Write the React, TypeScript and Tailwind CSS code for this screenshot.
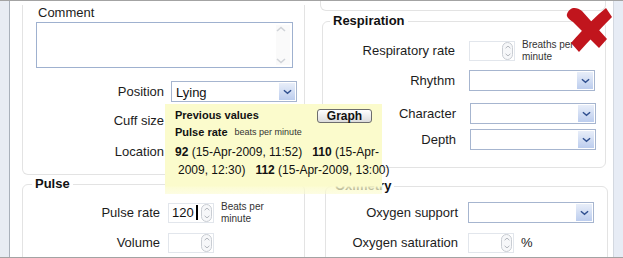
import type { ReactNode } from "react";

const font = { fontFamily: '"Liberation Sans", Arial, sans-serif' };

function Chevron({ up, className }: { up?: boolean; className?: string }) {
  return (
    <svg viewBox="0 0 10 6" className={className} fill="none">
      <path d={up ? "M1 5 L5 1.5 L9 5" : "M1 1 L5 4.5 L9 1"} stroke="currentColor" strokeWidth="1.6" />
    </svg>
  );
}

function Select({ value }: { value?: string }) {
  return (
    <div className="flex h-[21px] w-[126px] items-stretch border border-[#a6b5cf] bg-white p-px">
      <div className="flex-1 pl-[3px] text-[13px] leading-[19px] text-[#111]">{value}</div>
      <div className="flex w-[16px] items-center justify-center bg-[linear-gradient(180deg,#e8eef9_0%,#bccdee_100%)] text-[#2f4f8f]">
        <Chevron className="h-[6px] w-[9px]" />
      </div>
    </div>
  );
}

function Spin({ value }: { value?: string }) {
  return (
    <div className="flex h-[20px] w-[46px] items-center border border-[#e2e6ec] bg-white pr-px">
      <div className="flex flex-1 items-center pl-[3px] text-[13px] text-[#111]">
        {value}
        {value && <span className="ml-[2px] h-[15px] w-[2px] bg-black" />}
      </div>
      <div className="flex h-[18px] w-[11px] flex-col items-center justify-between rounded-full border border-[#c9cdd3] bg-[#f6f7f9] py-[2px] text-[#b0b4ba]">
        <Chevron up className="h-[4px] w-[6px]" />
        <Chevron className="h-[4px] w-[6px]" />
      </div>
    </div>
  );
}

function Row({ label, lw, gap, mt, children }: { label: string; lw: string; gap: string; mt: string; children?: ReactNode }) {
  return (
    <div className={`flex h-[21px] items-center ${gap} ${mt}`}>
      <div className={`${lw} shrink-0 text-right text-[13px] text-[#1c1c1c]`}>{label}</div>
      <div className="flex items-center">{children}</div>
    </div>
  );
}

function Units({ text1, text2 }: { text1: string; text2: string }) {
  return (
    <div className="ml-[7px] text-[10px] leading-[12px] text-[#333]">
      <div>{text1}</div>
      <div>{text2}</div>
    </div>
  );
}

export default function App() {
  return (
    <div style={font} className="relative flex h-[258px] w-[623px] overflow-hidden border-y border-[#a3a3a3] bg-white">
      <div className="w-[10px] shrink-0 border-r border-[#a9b0ba] bg-[#e8ecf3]" />

      <div className="flex flex-1">
        {/* left column */}
        <div className="ml-[12px] w-[283px] shrink-0">
          <div className="h-[170px] rounded-b-[6px] border-x border-b border-[#e3e3e3]">
            <div className="ml-[13px]">
              <div className="mt-[4px] pl-[2px] text-[13px] leading-[16px] text-[#1c1c1c]">Comment</div>
              <div className="mt-px flex h-[46px] w-[257px] justify-end border border-[#9fb1cf] bg-white p-[2px]">
                <div className="flex w-[14px] flex-col justify-between bg-[#fafafa] py-[1px] text-[#d0d3d8]">
                  <Chevron up className="h-[6px] w-[10px]" />
                  <Chevron className="h-[6px] w-[10px]" />
                </div>
              </div>
            </div>
            <Row label="Position" lw="w-[141px]" gap="gap-[7px]" mt="mt-[13px]">
              <Select value="Lying" />
            </Row>
            <Row label="Cuff size" lw="w-[141px]" gap="gap-[7px]" mt="mt-[8px]">
              <Select />
            </Row>
            <Row label="Location" lw="w-[141px]" gap="gap-[7px]" mt="mt-[10px]">
              <Select />
            </Row>
          </div>

          <fieldset className="mt-px h-[100px] rounded-[6px] border border-[#e3e3e3]">
            <legend className="ml-[9px] px-[3px] text-[13px] font-bold leading-[16px] text-[#111]">Pulse</legend>
            <Row label="Pulse rate" lw="w-[137px]" gap="gap-[8px]" mt="mt-[10px]">
              <Spin value="120" />
              <Units text1="Beats per" text2="minute" />
            </Row>
            <Row label="Volume" lw="w-[137px]" gap="gap-[8px]" mt="mt-[9px]">
              <Spin />
            </Row>
          </fieldset>
        </div>

        {/* right column */}
        <div className="ml-[15px] w-[288px] shrink-0">
          <div className="h-[10px] w-[286px] rounded-b-[6px] border-x border-b border-[#e3e3e3]" />
          <fieldset className="ml-[2px] mt-[2px] w-[284px] rounded-[6px] border border-[#e3e3e3] pb-[17px]">
            <legend className="ml-[7px] px-[3px] text-[13px] font-bold leading-[16px] text-[#111]">Respiration</legend>
            <Row label="Respiratory rate" lw="w-[132px]" gap="gap-[14px]" mt="mt-[11px]">
              <Spin />
              <Units text1="Breaths per" text2="minute" />
            </Row>
            <Row label="Rhythm" lw="w-[132px]" gap="gap-[14px]" mt="mt-[9px]">
              <Select />
            </Row>
            <Row label="Character" lw="w-[133px]" gap="gap-[14px]" mt="mt-[12px]">
              <Select />
            </Row>
            <Row label="Depth" lw="w-[133px]" gap="gap-[14px]" mt="mt-[5px]">
              <Select />
            </Row>
          </fieldset>

          <fieldset className="ml-[5px] mt-[10px] h-[100px] w-[283px] rounded-[6px] border border-[#e3e3e3]">
            <legend className="ml-[6px] px-[3px] text-[13px] font-bold leading-[16px] text-[#111]">Oximetry</legend>
            <Row label="Oxygen support" lw="w-[132px]" gap="gap-[10px]" mt="mt-[8px]">
              <Select />
            </Row>
            <Row label="Oxygen saturation" lw="w-[132px]" gap="gap-[10px]" mt="mt-[9px]">
              <Spin />
              <span className="ml-[7px] text-[13px] text-[#1c1c1c]">%</span>
            </Row>
          </fieldset>
        </div>
      </div>

      <div className="w-[10px] shrink-0 border-l border-[#d3d8e0] bg-[#e7ecf5]" />

      {/* previous values tooltip */}
      <div className="absolute left-[165px] top-[103px] h-[90px] w-[217px] bg-[linear-gradient(180deg,#fbfbcc_0%,#fbfbcc_91%,rgba(251,251,204,0.8)_93%,rgba(251,251,204,0.55)_100%)] px-[10px] pt-[4px] text-[12px] text-[#111]">
        <div className="flex h-[15px] items-center justify-between">
          <span className="text-[11px] font-bold">Previous values</span>
          <button className="flex h-[14px] w-[55px] items-center justify-center rounded-[3px] border border-[#6d6d6d] bg-[linear-gradient(180deg,#ffffff_0%,#dcdcdc_100%)] text-[12px] font-bold leading-none text-[#111]">
            Graph
          </button>
        </div>
        <div className="mt-[2px] flex h-[15px] items-center">
          <span className="text-[11px] font-bold">Pulse rate</span>
          <span className="ml-[7px] text-[9px] text-[#333]">beats per minute</span>
        </div>
        <div className="mt-[3px] whitespace-nowrap leading-[18px]">
          <div>
            <b>92</b> (15-Apr-2009, 11:52)&nbsp;&nbsp; <b>110</b> (15-Apr-
          </div>
          <div className="pl-[3px]">
            2009, 12:30)&nbsp;&nbsp; <b>112</b> (15-Apr-2009, 13:00)
          </div>
        </div>
      </div>

      {/* close mark */}
      <svg viewBox="0 0 48 48" className="absolute left-[564px] top-[3px] h-[48px] w-[48px]">
        <path d="M3 10 C6 2 13 3 18 7 L43 35 L35 44 L9 18 C5 15 2 13 3 10 Z" fill="#c1151d" />
        <path d="M48 13 L42 4 C33 11 20 24 7 39 L15 48 C25 37 36 25 48 13 Z" fill="#c1151d" />
      </svg>
    </div>
  );
}
